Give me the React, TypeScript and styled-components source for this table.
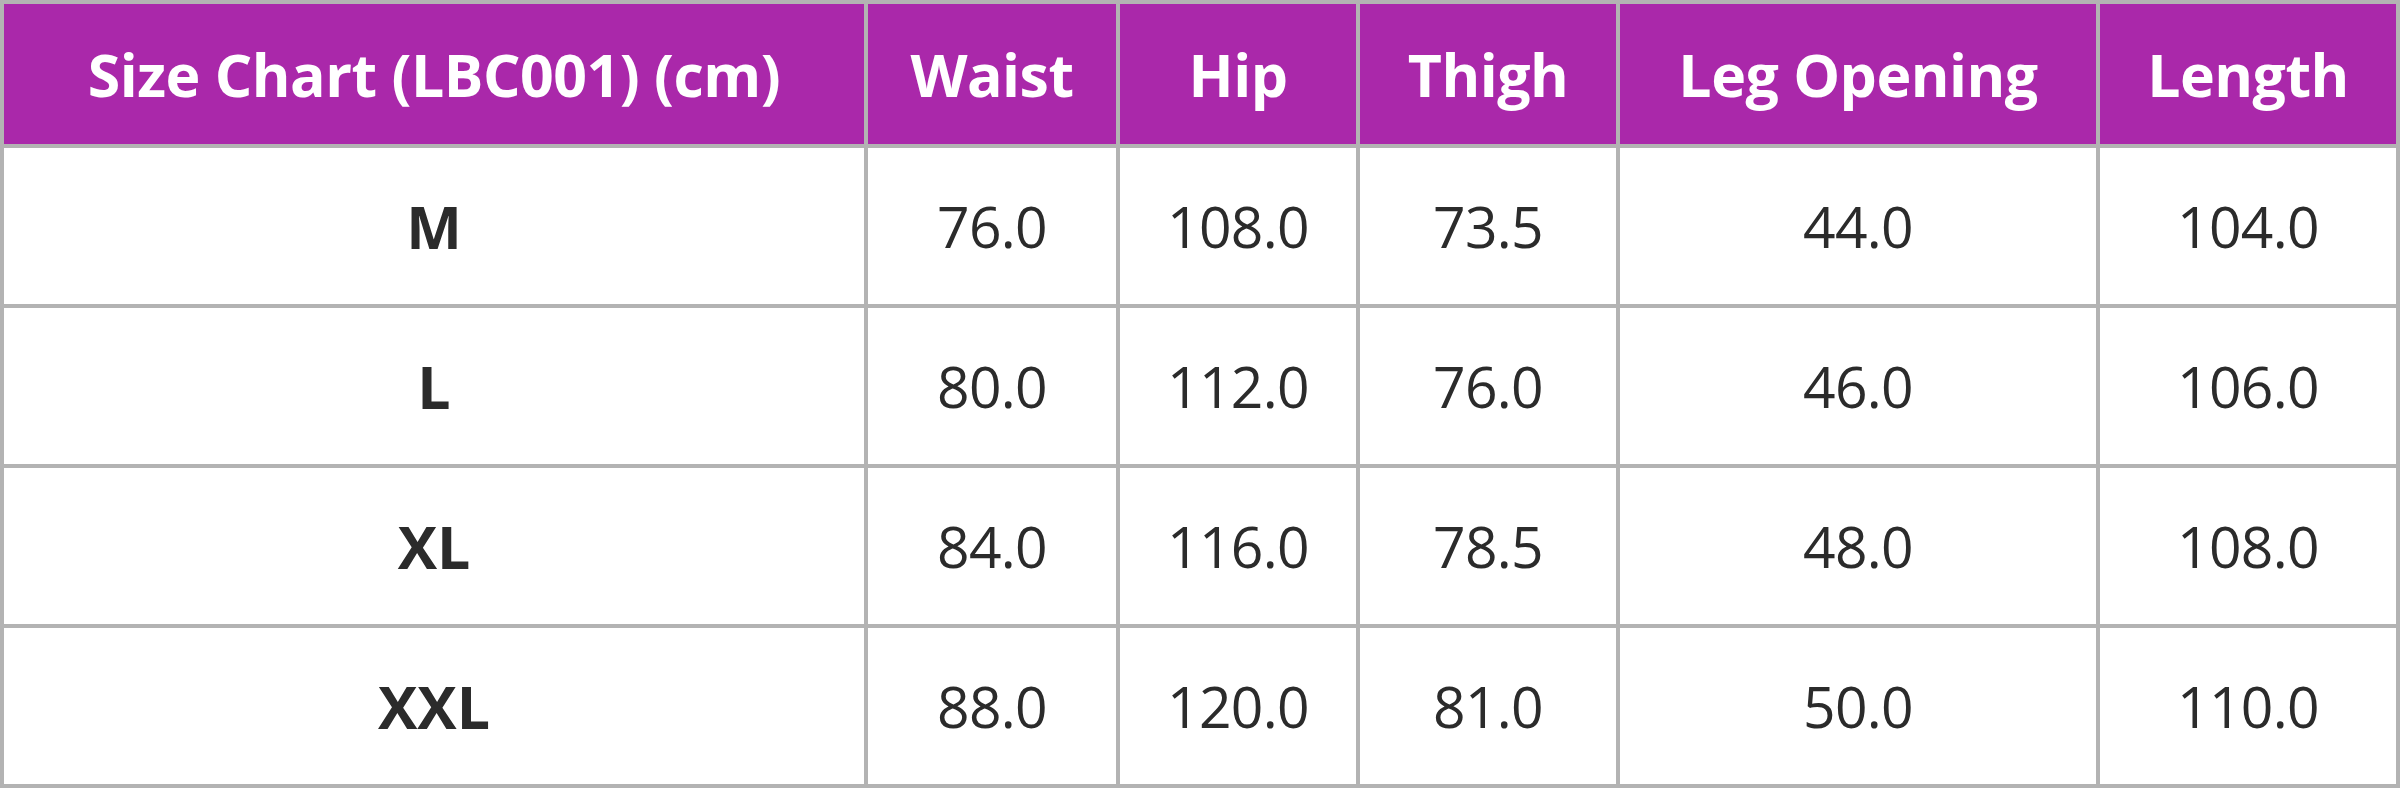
import styled, { createGlobalStyle } from "styled-components";

const GlobalStyle = createGlobalStyle`
  html, body {
    margin: 0;
    padding: 0;
    background: #ffffff;
  }
`;

const Chart = styled.div`
  display: grid;
  grid-template-columns: 860px 248px 236px 256px 476px 296px;
  grid-template-rows: 140px repeat(4, 156px);
  gap: 4px;
  padding: 4px;
  width: 2400px;
  box-sizing: border-box;
  background-color: #b3b3b3;
  font-family: "Open Sans", "Noto Sans", sans-serif;
`;

const HeadCell = styled.div`
  display: flex;
  align-items: center;
  justify-content: center;
  background-color: #aa28aa;
  color: #ffffff;
  font-size: 59px;
  font-weight: 700;
  letter-spacing: -0.5px;
  white-space: nowrap;
`;

const Cell = styled.div<{ $bold?: boolean }>`
  display: flex;
  align-items: center;
  justify-content: center;
  background-color: #ffffff;
  color: #2b2b2b;
  font-size: ${(props) => (props.$bold ? "59px" : "57px")};
  font-weight: ${(props) => (props.$bold ? 700 : 400)};
  letter-spacing: ${(props) => (props.$bold ? "0" : "-0.7px")};
  white-space: nowrap;
`;

const columns = ["Size Chart (LBC001) (cm)", "Waist", "Hip", "Thigh", "Leg Opening", "Length"];

const rows = [
  ["M", "76.0", "108.0", "73.5", "44.0", "104.0"],
  ["L", "80.0", "112.0", "76.0", "46.0", "106.0"],
  ["XL", "84.0", "116.0", "78.5", "48.0", "108.0"],
  ["XXL", "88.0", "120.0", "81.0", "50.0", "110.0"],
];

export default function App() {
  return (
    <>
      <GlobalStyle />
      <Chart>
        {columns.map((title) => (
          <HeadCell key={title}>{title}</HeadCell>
        ))}
        {rows.map((row) =>
          row.map((value, i) => (
            <Cell key={row[0] + i} $bold={i === 0}>
              {value}
            </Cell>
          ))
        )}
      </Chart>
    </>
  );
}
